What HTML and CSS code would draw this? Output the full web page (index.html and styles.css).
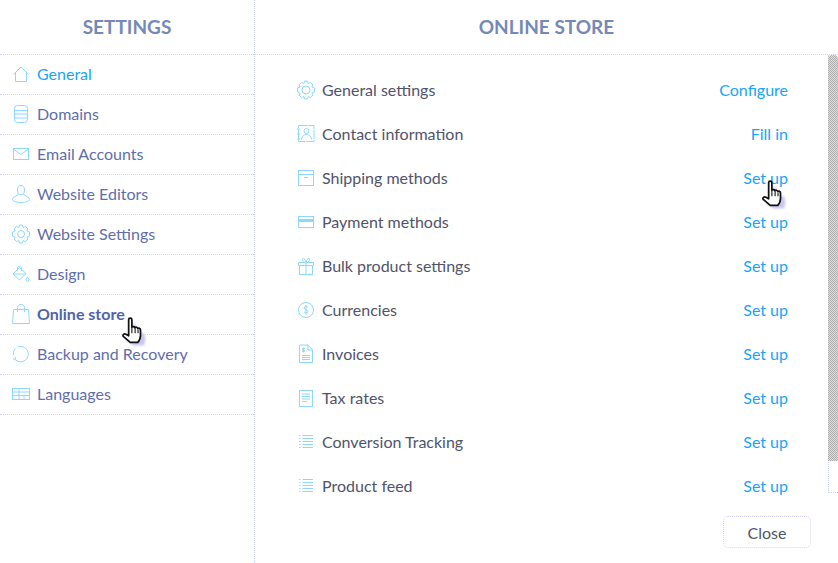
FILE: index.html
```html
<!DOCTYPE html>
<html lang="en">
<head>
    <meta charset="UTF-8">
    <title>Settings - Online store</title>
    <link rel="stylesheet" href="styles.css">
</head>
<body>

<div class="sidebar">
    <h2 class="panel-title">SETTINGS</h2>
    <a class="side-item active">
        <svg class="icon" viewBox="0 0 20 20"><path d="M2.500 10.500 10 3l7.500 7.500M4.500 9v8.500h11V9"/></svg>
        General
    </a>
    <a class="side-item">
        <svg class="icon" viewBox="0 0 20 20"><rect x="3.500" y="1.500" width="13" height="17" rx="3"/><path d="M3.500 6.500h13M3.500 10h13M3.500 14h13"/></svg>
        Domains
    </a>
    <a class="side-item">
        <svg class="icon" viewBox="0 0 20 20"><rect x="2.500" y="4.500" width="15" height="11"/><path d="M2.500 5 10 10.500 17.500 5"/></svg>
        Email Accounts
    </a>
    <a class="side-item">
        <svg class="icon" viewBox="0 0 20 20"><ellipse cx="10" cy="6" rx="3.500" ry="4.500"/><path d="M7.500 10c-1 2.500-6 2.500-6 5.500 0 1.500 3.500 3 8.500 3s8.500-1.500 8.500-3c0-3-5-3-6-5.500"/></svg>
        Website Editors
    </a>
    <a class="side-item">
        <svg class="icon" viewBox="0 0 20 20"><circle cx="10" cy="10" r="3.500"/><path d="M8.500 1h3l.7 2.500 2.200-1 2.500 2.300-1 2.200 2.600 1v4l-2.600 1 1 2.200-2.500 2.300-2.200-1-.7 2.500h-3l-.7-2.500-2.200 1-2.500-2.300 1-2.200-2.600-1V8l2.600-1-1-2.200 2.500-2.300 2.200 1z"/></svg>
        Website Settings
    </a>
    <a class="side-item">
        <svg class="icon" viewBox="0 0 20 20"><path d="M8.500 3.500 2 10l6.500 6 6.500-6.500zM2.500 10h12"/><path d="M6.500 6.500V4c0-2.500 4-2.500 4 0v3M16.500 13c-1 1.500-1.500 2.200-1.500 3a1.500 1.500 0 0 0 3 0c0-.8-.5-1.500-1.500-3z"/></svg>
        Design
    </a>
    <a class="side-item current">
        <svg class="icon icon-bag" viewBox="0 0 20 20"><path d="M2.500 5.500h15l1 14H1.500zM6.500 8V3.500C6.500 1.500 8 .500 10 .500s3.500 1 3.500 3V8"/></svg>
        Online store
    </a>
    <a class="side-item">
        <svg class="icon" viewBox="0 0 20 20"><path d="M7 2.900a7.700 7.700 0 1 1-2.800 12.700M4.400 4.500A7.700 7.700 0 0 0 2.300 11M1.800 14.500l2.400 1.100.6-2.600"/></svg>
        Backup and Recovery
    </a>
    <a class="side-item">
        <svg class="icon" viewBox="0 0 20 20"><rect x="1.500" y="4.500" width="17" height="11"/><path d="M1.500 8h6.500v7.500M8 4.500V8h10.500M1.500 11.500h17M13 11.500v4"/></svg>
        Languages
    </a>

    <svg class="cursor cursor-side" viewBox="1 1 21 26"><use href="#hand"/></svg>
</div>

<div class="main">
    <h2 class="panel-title">ONLINE STORE</h2>

    <div class="scroll-wrap">
        <div class="store-list">
            <div class="store-row">
                <svg class="icon" viewBox="0 0 20 20"><circle cx="10" cy="10" r="4"/><path d="M8.500 1h3l.7 2.500 2.200-1 2.500 2.300-1 2.200 2.600 1v4l-2.600 1 1 2.200-2.500 2.300-2.200-1-.7 2.500h-3l-.7-2.500-2.200 1-2.500-2.300 1-2.200-2.600-1V8l2.600-1-1-2.200 2.500-2.300 2.200 1z"/></svg>
                <span class="store-label">General settings</span>
                <a class="store-link">Configure</a>
            </div>
            <div class="store-row">
                <svg class="icon" viewBox="0 0 20 20"><rect x="2.500" y="1.500" width="15.500" height="16" stroke-dasharray="9 1"/><circle cx="10.500" cy="7" r="2.500"/><path d="M5.500 15.500c.5-3.500 2.500-5 5-5s4.500 1.500 5 5M1 5h3M1 10h3M1 15h3"/></svg>
                <span class="store-label">Contact information</span>
                <a class="store-link">Fill in</a>
            </div>
            <div class="store-row">
                <svg class="icon" viewBox="0 0 20 20"><rect x="2.500" y="2.500" width="15" height="15"/><path d="M2.500 6.500h15M8 9.500h4"/></svg>
                <span class="store-label">Shipping methods</span>
                <a class="store-link">Set up</a>
            </div>
            <div class="store-row">
                <svg class="icon" viewBox="0 0 20 20"><rect x="2.500" y="4.500" width="15" height="11"/><path class="thick" d="M2.500 8.500h15"/></svg>
                <span class="store-label">Payment methods</span>
                <a class="store-link">Set up</a>
            </div>
            <div class="store-row">
                <svg class="icon" viewBox="0 0 20 20"><rect x="3.500" y="9.500" width="13" height="9"/><path d="M2.500 6.500h15v3h-15zM10 6.500v12M10 6.500C8 6.500 6.500 5.500 6.500 3.500S8.500 1.500 10 6.500c1.500-5 3.500-5 3.500-3s-1.500 3-3.500 3"/></svg>
                <span class="store-label">Bulk product settings</span>
                <a class="store-link">Set up</a>
            </div>
            <div class="store-row">
                <svg class="icon" viewBox="0 0 20 20"><circle cx="10" cy="10" r="7.500"/><path d="M12 7.500c-.5-1-3.500-1.500-4 .3s4 1.700 4 3.700-3.500 1.500-4 .3M10 5v10"/></svg>
                <span class="store-label">Currencies</span>
                <a class="store-link">Set up</a>
            </div>
            <div class="store-row">
                <svg class="icon" viewBox="0 0 20 20"><path d="M3.500 1h8.500l4.500 5v12.500h-13zM12 1v5h4.500M6 11.500h8M6 13.500h8M6 15.500h8"/><path d="M7.500 3.500v5M9 4.500H6.500V6H8.500v1.500H6"/></svg>
                <span class="store-label">Invoices</span>
                <a class="store-link">Set up</a>
            </div>
            <div class="store-row">
                <svg class="icon" viewBox="0 0 20 20"><rect x="3.500" y="2.500" width="13" height="16"/><path d="M6 6h8M6 8.500h8M6 11h8M6 13.500h5"/></svg>
                <span class="store-label">Tax rates</span>
                <a class="store-link">Set up</a>
            </div>
            <div class="store-row">
                <svg class="icon" viewBox="0 0 20 20"><path d="M3 3.500h1.500M3 6.500h1.500M3 9.500h1.500M3 12.500h1.500M3 15.500h1.500M6.500 3.500h10.500M6.500 6.500h10.500M6.500 9.500h10.500M6.500 12.500h10.500M6.500 15.500h10.500"/></svg>
                <span class="store-label">Conversion Tracking</span>
                <a class="store-link">Set up</a>
            </div>
            <div class="store-row">
                <svg class="icon" viewBox="0 0 20 20"><path d="M3 3.500h1.500M3 6.500h1.500M3 9.500h1.500M3 12.500h1.500M3 15.500h1.500M6.500 3.500h10.500M6.500 6.500h10.500M6.500 9.500h10.500M6.500 12.500h10.500M6.500 15.500h10.500"/></svg>
                <span class="store-label">Product feed</span>
                <a class="store-link">Set up</a>
            </div>
        </div>
        <div class="scrollbar"><div class="scrollbar-thumb"></div></div>
    </div>

    <div class="footer">
        <button class="close-btn">Close</button>
    </div>

    <svg class="cursor cursor-main" viewBox="1 1 21 26"><use href="#hand"/></svg>
</div>

<svg class="defs" width="0" height="0">
    <defs>
        <g id="hand">
            <path class="hand-shadow" fill="#c9c6ee" d="M9 6h3v7l8 2 1 5-1 6H10l-7-5 2-3 4 2z" transform="translate(1.500 1.500)"/>
            <path fill="#fff" stroke="#111" stroke-width="1.600" stroke-linejoin="round" d="M7 3.500c0-2 3-2 3 0v7c1-1 2.500-.7 2.800.5.800-.9 2.400-.6 2.700.7.900-.6 2.500-.2 2.500 1.300v5c0 3-1.500 5.500-2.500 6.500H8.500L2 19c-1-1.300.8-3.200 2.500-2L7 18.500z"/>
            <path stroke="#111" stroke-width="1" d="M10 11v5M13 11.500v4.500M15.700 12.500V16"/>
        </g>
    </defs>
</svg>

</body>
</html>
```

FILE: styles.css
```css
* {
    box-sizing: border-box;
}

body {
    display: flex;
    margin: 0;
    height: 563px;
    overflow: hidden;
    background-color: #fff;
    font-family: Lato, "Open Sans", Arial, sans-serif;
    font-size: 16px;
}

.panel-title {
    height: 55px;
    margin: 0;
    border-bottom: 1px dotted #d2d2fc;
    color: #7589b8;
    font-size: 19px;
    font-weight: 700;
    line-height: 54px;
    text-align: center;
}

.sidebar {
    position: relative;
    flex: none;
    width: 255px;
    border-right: 1px dotted #d2d2fc;
}

.side-item {
    display: flex;
    align-items: center;
    gap: 6px;
    height: 40px;
    padding: 0 0 2px 11px;
    border-bottom: 1px dotted #d2d2fc;
    color: #5f6eab;
}

.side-item.active {
    color: #18a4fb;
}

.side-item.current {
    color: #4f64a6;
    font-weight: 700;
}

.icon {
    flex: none;
    width: 20px;
    height: 20px;
    fill: none;
    stroke: #8ed8fd;
    stroke-width: 1;
}

.icon .thick {
    stroke-width: 3;
}

.main {
    position: relative;
    flex: 1;
    min-width: 0;
}

.scroll-wrap {
    display: flex;
    height: 438px;
}

.store-list {
    flex: 1;
    padding: 13px 40px 0 41px;
}

.store-row {
    display: flex;
    align-items: center;
    height: 44px;
}

.store-label {
    flex: 1;
    margin-left: 6px;
    padding-bottom: 2px;
    color: #50546a;
}

.store-link {
    padding-bottom: 2px;
    color: #18a4fb;
}

.scrollbar {
    flex: none;
    width: 10px;
    border-left: 1px dotted #d2d2fc;
    border-bottom: 1px dotted #d2d2fc;
}

.scrollbar-thumb {
    height: 406px;
    margin-left: -1px;
    border-radius: 4px 4px 0 0;
    background-color: #c4c4c4;
    background-image: repeating-conic-gradient(#b0b0b0 0 25%, #dcdcdc 0 50%);
    background-size: 2px 2px;
}

.footer {
    display: flex;
    justify-content: flex-end;
    padding: 23px 27px 0 0;
}

.close-btn {
    width: 88px;
    height: 32px;
    border: 1px dotted #d2d2fc;
    border-radius: 5px;
    background: #fff;
    color: #50546a;
    font-family: inherit;
    font-size: 16px;
}

.cursor {
    position: absolute;
    width: 23px;
    height: 28px;
    overflow: visible;
}

.hand-shadow {
    filter: blur(1px);
}

.cursor-side {
    left: 122px;
    top: 317px;
}

.cursor-main {
    left: 507px;
    top: 180px;
}

.defs {
    position: absolute;
}
```
